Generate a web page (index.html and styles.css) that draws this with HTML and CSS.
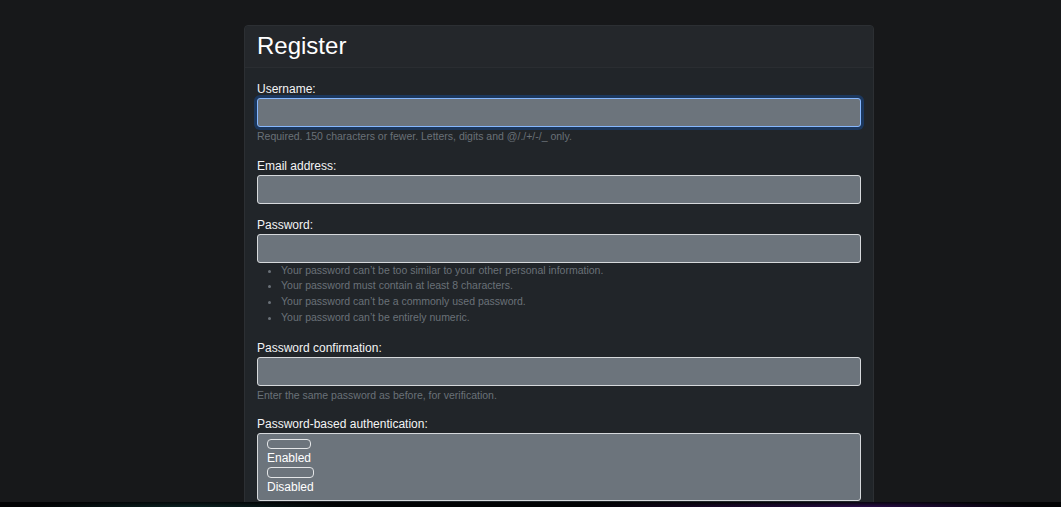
FILE: index.html
```html
<!DOCTYPE html>
<html lang="en">
<head>
<meta charset="utf-8">
<title>Register</title>
<link rel="stylesheet" href="styles.css">
</head>
<body>
<main class="page">
  <section class="card">
    <header class="card-header">
      <h1 class="title">Register</h1>
    </header>
    <form class="card-body">
      <div class="field">
        <label class="label" for="u">Username:</label>
        <input id="u" class="control control-focus" type="text">
        <div class="help">Required. 150 characters or fewer. Letters, digits and @/./+/-/_ only.</div>
      </div>
      <div class="field">
        <label class="label" for="e">Email address:</label>
        <input id="e" class="control" type="text">
      </div>
      <div class="field">
        <label class="label" for="p">Password:</label>
        <input id="p" class="control" type="text">
        <ul class="help-list">
          <li>Your password can’t be too similar to your other personal information.</li>
          <li>Your password must contain at least 8 characters.</li>
          <li>Your password can’t be a commonly used password.</li>
          <li>Your password can’t be entirely numeric.</li>
        </ul>
      </div>
      <div class="field">
        <label class="label" for="p2">Password confirmation:</label>
        <input id="p2" class="control" type="text">
        <div class="help">Enter the same password as before, for verification.</div>
      </div>
      <div class="field">
        <div class="label">Password-based authentication:</div>
        <div class="control choice-box">
          <div class="choice"><span class="choice-input"></span><span class="choice-text">Enabled</span></div>
          <div class="choice"><span class="choice-input"></span><span class="choice-text">Disabled</span></div>
        </div>
      </div>
    </form>
  </section>
</main>
<div class="bottom-strip"></div>
</body>
</html>
```
FILE: styles.css
```css
html {
  font-size: 12px;
}
body {
  margin: 0;
  background: #17181a;
  color: #f1f2f3;
  font-family: "Liberation Sans", Arial, sans-serif;
  font-size: 12px;
  line-height: 1.5;
}
.page {
  padding: 25px 0 0 244px;
}
.card {
  width: 630px;
  box-sizing: border-box;
  background: #212529;
  border: 1px solid #2c2f33;
  border-radius: 4px;
}
.card-header {
  background: #24272b;
  border-bottom: 1px solid #2a2d31;
  padding: 6px 12px 6px;
  border-radius: 4px 4px 0 0;
}
.title {
  margin: 0;
  font-size: 24px;
  font-weight: 400;
  line-height: 28.8px;
  color: #ffffff;
}
.card-body {
  padding: 12px 12px 12px;
  display: flex;
  flex-direction: column;
  gap: 12px;
}
.field {
  display: flex;
  flex-direction: column;
}
.label {
  display: block;
  color: #f3f4f5;
  line-height: 18px;
}
.control {
  display: block;
  box-sizing: border-box;
  width: 100%;
  height: 29px;
  margin: 0;
  padding: 4.5px 9px;
  background: #6c747c;
  border: 1px solid #d6d9dc;
  border-radius: 3px;
  color: #fff;
  font: inherit;
  outline: none;
}
.control-focus {
  border-color: #86b7fe;
  box-shadow: 0 0 0 3px rgba(13, 110, 253, 0.25);
}
.help {
  margin-top: 2px;
  font-size: 10.5px;
  line-height: 15.75px;
  color: #6a7178;
}
.help-list {
  margin: 0 0 1px;
  padding-left: 24px;
  font-size: 10.5px;
  line-height: 15.75px;
  color: #6a7178;
}
.choice-box {
  height: auto;
  padding: 4.5px 9px;
  display: flex;
  flex-direction: column;
  align-items: flex-start;
}
.choice {
  display: inline-flex;
  flex-direction: column;
  align-items: stretch;
}
.choice-input {
  display: block;
  height: 10.5px;
  box-sizing: border-box;
  border: 1px solid #e4e6e8;
  border-radius: 4px;
  background: #6c747c;
}
.choice-text {
  line-height: 18px;
  color: #ffffff;
}
.bottom-strip {
  position: fixed;
  left: 0;
  right: 0;
  bottom: 0;
  height: 5px;
  background:
    radial-gradient(ellipse 160px 6px at 190px 100%, rgba(20, 60, 60, 0.55), transparent),
    radial-gradient(ellipse 180px 6px at 860px 100%, rgba(70, 20, 120, 0.6), transparent),
    radial-gradient(ellipse 120px 6px at 700px 100%, rgba(40, 10, 60, 0.5), transparent),
    #020304;
}
```
